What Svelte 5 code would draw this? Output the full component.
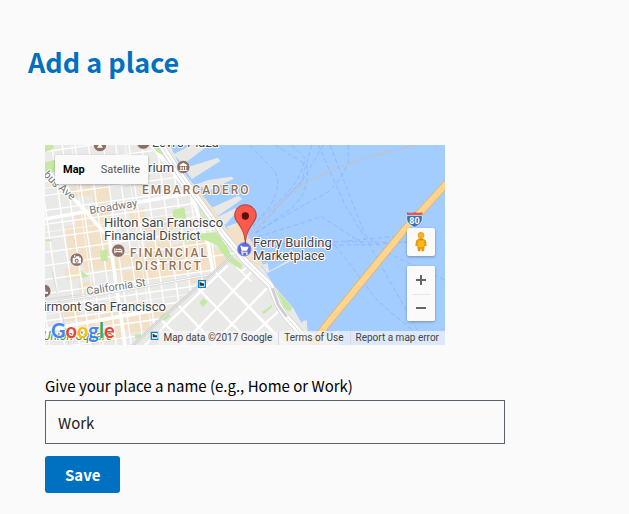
<script>
  let name = $state('Work');
  let view = $state('map');

  // Street grids, in map-drawing units (three per pixel)
  const avenues = [-60, -15, 30, 62, 100, 140, 185, 222, 262, 300, 345, 385, 425, 470, 510];
  const streets = [20, 62, 108, 152, 196, 238, 280, 322, 362, 404, 446, 486, 528, 570, 612, 654];
  const blocks = [
    [75, 128, 60, 32], [140, 130, 54, 50], [140, 185, 50, 50], [90, 205, 56, 44], [60, 245, 80, 40],
    [128, 240, 60, 80], [66, 285, 60, 70], [140, 320, 56, 56], [60, 370, 44, 36], [250, 195, 46, 40],
    [295, 225, 84, 40], [220, 325, 76, 40], [300, 295, 80, 76], [375, 300, 60, 72], [425, 290, 60, 90],
    [180, 345, 50, 40], [110, 320, 34, 60], [100, 415, 44, 30], [225, 380, 76, 34], [300, 375, 80, 34],
    [385, 360, 110, 30], [430, 396, 50, 20], [55, 490, 46, 40], [100, 520, 80, 44], [180, 505, 60, 60],
    [240, 475, 54, 28], [245, 515, 70, 50], [125, 560, 100, 40], [315, 495, 50, 26], [235, 55, 50, 30]
  ];
  const ferries = [
    'M615 0L690 80Q715 140 660 200L625 245', 'M690 0L785 60Q800 130 740 190L625 270',
    'M740 0L780 40Q770 110 690 180L625 240', 'M800 0L770 110L650 230', 'M835 0L770 110L640 250',
    'M910 0V50Q895 100 850 140L625 265', 'M820 0L900 180L985 320L1120 560',
    'M855 0L960 270L1040 330L1200 405', 'M640 290Q900 310 1090 290', 'M690 305Q950 285 1090 270',
    'M870 300L1000 470L1105 558', 'M640 275L830 215L960 300', 'M900 290L1090 292'
  ];
</script>

<main>
  <h1>Add a place</h1>

  <form onsubmit={(e) => e.preventDefault()}>
    <div class="map">
      <svg class="canvas" viewBox="0 0 400 200" preserveAspectRatio="xMinYMin slice" role="img" aria-label="Map of the San Francisco waterfront">
        <defs>
          <clipPath id="land"><path d="M0 0H375L410 75L455 130L500 185L545 250L590 290L625 335L655 372L690 425L745 490L770 535L790 560V600H0Z" /></clipPath>
          <clipPath id="north"><path d="M0 0H345L600 340L560 330L330 540L260 600H0Z" /></clipPath>
          <clipPath id="south"><path d="M562 338L600 365L680 440L720 520L770 570V600H270L340 532Z" /></clipPath>
        </defs>
        <g transform="scale(.33333)" fill="none">
          <path fill="#a3ccff" d="M0 0H1200V600H0Z" />
          <g fill="#e8e8e6">
            <path d="M385 28L440 0H492L415 58ZM418 70L518 38L526 48L440 103ZM455 118L490 105L560 95L566 101L490 138ZM500 188L580 152L592 162L520 212ZM520 215L570 190L578 198L540 240ZM545 245L580 232L586 240L560 262ZM650 360L665 385L745 345L740 341L672 378L668 355ZM770 530L785 525L788 560L850 575L880 555V600H770Z" />
          </g>
          <path fill="#f2e0c7" d="M545 255L588 232L612 275L655 360L640 372L590 320Z" />
          <g clip-path="url(#land)">
            <path fill="#e9e9e8" d="M0 0H800V600H0Z" />
            <g fill="#f2e0c7">
              {#each blocks as [x, y, w, h]}
                <path d="M{x} {y}l{w} {-w * 0.15}l{h * 0.14} {h}l{-w} {w * 0.15}Z" />
              {/each}
              <path d="M455 130L500 185L545 250L625 310L660 375L590 335L500 225L440 135ZM490 300L550 330L550 350L500 385Z" />
            </g>
            <g clip-path="url(#north)" stroke="#fff">
              <g stroke-width="4">
                {#each avenues as x}<path d="M{x - 10} 0L{x + 74} 600" />{/each}
                {#each streets as y}<path d="M0 {y}L600 {y - 84}" />{/each}
              </g>
              <path stroke-width="2" d="M80 0L165 600M240 0L325 600M0 130L500 60M0 262L450 199M0 508L450 445" />
              <path stroke-width="11" d="M185 225L240 600M0 222L430 145M0 555L360 490M0 70L105 180L180 265M320 0L440 150L490 300L505 390" />
              <path stroke="#d4d4d4" stroke-width="7" d="M0 472L130 455L500 388L530 365" />
              <path stroke-width="3" d="M0 472L130 455L500 388L530 365" />
              <path stroke="#c9c9ca" stroke-width="2" stroke-dasharray="12 2" d="M22 380L72 600M0 463L130 446" />
            </g>
            <g fill="#c5e8a3">
              <path d="M0 0H25V12L0 22ZM0 52L30 45V80L0 85ZM318 0L345 5L358 30L340 24ZM383 195L418 187L424 222L384 218ZM440 268L515 262L545 303L560 335L592 360L588 374L550 345L515 300L480 285L442 288ZM165 318L188 312V348H168ZM106 375L118 385L132 394L112 399ZM695 434L742 488L735 500L718 492ZM345 515L365 500L378 514L352 530ZM388 480L400 472L405 482L396 489ZM0 283H20V289H0ZM270 568H288V580H270ZM408 278L440 272V286L412 290Z" />
            </g>
            <path fill="#d9e7d0" d="M458 178L478 184L505 228L468 226Z" />
            <g clip-path="url(#south)" stroke="#fff" stroke-width="7">
              <path d="M450 420L660 640M505 375L730 610M385 465L540 630M340 515L430 610M620 380L410 600M548 362L300 600M665 430L500 600M705 495L590 600" />
              <path stroke-width="5" d="M575 365L620 410M590 380L610 362M585 455L700 575" />
            </g>
            <path fill="#c5e8a3" d="M463 472L476 460L488 471L474 486ZM652 500L681 479V487L656 508ZM520 310L545 322L592 360L586 372L552 350Z" />
            <path stroke="#c4c4c4" stroke-width="9" d="M562 333L340 530L260 604" />
            <path stroke="#ededed" stroke-width="6" d="M562 333L340 530L260 604" />
            <path stroke="#c0c0c0" stroke-width="2" d="M562 333L340 530L260 604" />
            <path stroke="#d0d0d0" stroke-width="21" d="M345 -5L410 95L475 185L535 268L598 345L675 420L700 480L725 518L790 590" />
            <path stroke="#fff" stroke-width="17" d="M345 -5L410 95L475 185L535 268L598 345L675 420L700 480L725 518L790 590" />
            <path stroke="#ccc" stroke-width="2" d="M345 -5L410 95L475 185L535 268L598 345L675 420L700 480L725 518L790 590" />
            <path stroke="#cfcfcf" stroke-width="9" d="M682 430L700 480L725 515" />
          </g>
          <g stroke="#86aefc" stroke-width="2" stroke-dasharray="14 8">
            {#each ferries as d}<path {d} />{/each}
          </g>
          <path stroke="#bfc3cb" stroke-width="4" stroke-dasharray="78 12" d="M610 280L665 215L760 125L850 80L950 42L1110 0" />
          <path stroke="#e5b567" stroke-width="23" d="M805 600L840 545L1075 258L1210 110" />
          <path stroke="#ffd48f" stroke-width="18" d="M805 600L840 545L1075 258L1210 110" />
        </g>

        <g class="labels">
          <text class="road" transform="translate(-2 30) rotate(48)">bus</text>
          <text class="road" transform="translate(13 44) rotate(40)">Ave</text>
          <text class="road" transform="translate(45 69) rotate(-9)">Broadway</text>
          <text class="road" transform="translate(42 150) rotate(-9)">California St</text>
          <text class="poi" x="107" y="2">Levi's Plaza</text>
          <text class="poi" x="103" y="27">rium</text>
          <text class="area" x="97" y="49">EMBARCADERO</text>
          <text class="poi" x="59" y="82">Hilton San Francisco</text>
          <text class="poi" x="59" y="95">Financial District</text>
          <text class="area" x="85" y="112">FINANCIAL</text>
          <text class="area" x="90" y="125">DISTRICT</text>
          <text class="poi" x="208" y="102">Ferry Building</text>
          <text class="poi" x="208" y="115">Marketplace</text>
          <text class="poi" x="121" y="166" text-anchor="end">Fairmont San Francisco</text>
          <text class="park" x="-2" y="195">Union Square</text>
        </g>

        <g transform="scale(.33333)">
          <g fill="#8d6e63" stroke="#fff" stroke-width="2">
            <circle cx="165" cy="0" r="20" /><circle cx="295" cy="-7" r="20" />
            <circle cx="415" cy="66" r="20" /><circle cx="220" cy="317" r="20" />
            <circle cx="95" cy="344" r="20" /><circle cx="-2" cy="438" r="20" />
          </g>
          <path fill="#fff" d="M404 60L415 53L426 60V63H404ZM406 65H410V74H406ZM413 65H417V74H413ZM420 65H424V74H420ZM403 75H427V78H403ZM156 8L161 0H169L174 8ZM208 310H211V318H229V311L232 314V325H229V322H211V325H208ZM213 311H218V316H213ZM220 311H228V316H220ZM-2 431H1V440H9V446H-2Z" />
          <path fill="#fff" fill-rule="evenodd" d="M83 338H91L94 334H103V338H108V355H83ZM95 341A6 6 0 1 0 95.100 341ZM87 331H91V335H87Z" />
          <circle cx="95" cy="347" r="3" fill="#fff" />
          <circle cx="598" cy="313" r="20" fill="#5c6be0" stroke="#7986f0" stroke-width="3" />
          <path fill="#fff" d="M586 302H591L593 305H611L606 317H593L592 320H608V323H588L590 317ZM590 325H595V329H590ZM603 325H608V329H603Z" />
          <g fill="#fff" stroke="#0288d1" stroke-width="4">
            <path d="M461 407H481V427H461ZM319 562H340V583H319Z" />
          </g>
          <path fill="#333" d="M464 412H468L471 415H477V422H464ZM323 567H326L330 571H336V577H323Z" />
          <path fill="#c93b31" stroke="#9d2d24" stroke-width="2" d="M601 296C599 270 594 258 583 241C575 229 569 222 569 211C569 193 583 179 601 179C619 179 634 193 634 211C634 222 628 229 620 241C609 258 603 270 601 296Z" />
          <path fill="#fb5a4d" d="M601 286C598 266 594 255 585 240C577 228 571 222 571 211C571 194 584 181 601 181C618 181 632 194 632 211C632 222 626 228 618 240C608 256 604 266 601 286Z" />
          <circle cx="601" cy="213" r="11" fill="#5b100c" />
          <path fill="#3573c4" stroke="#fff" stroke-width="2" d="M1086 211H1131C1136 231 1124 240 1109 247C1093 240 1081 231 1086 211Z" />
          <path fill="#dc5a56" d="M1086 201Q1098 206 1109 201Q1120 206 1132 201V210H1086Z" />
        </g>
        <text class="shield" x="369.500" y="79" text-anchor="middle">80</text>
        <text class="google" x="6" y="193"><tspan fill="#4285f4">G</tspan><tspan fill="#ea4335">o</tspan><tspan fill="#fbbc05">o</tspan><tspan fill="#4285f4">g</tspan><tspan fill="#34a853">l</tspan><tspan fill="#ea4335">e</tspan></text>
      </svg>

      <div class="types">
        <button type="button" class:on={view === 'map'} onclick={() => (view = 'map')}>Map</button>
        <button type="button" class:on={view === 'satellite'} onclick={() => (view = 'satellite')}>Satellite</button>
      </div>

      <div class="controls">
        <button type="button" class="pegman" aria-label="Street View">
          <svg width="12" height="20" viewBox="0 0 36 60">
            <path fill="#e59b0b" d="M9 21Q18 16 27 21L33 26L35 42H29L27 58H20L18 48L16 58H9L7 42H1L3 26Z" />
            <path fill="#fbb71b" d="M11 22H25L28 38L24 45H12L8 38Z" />
            <path fill="#d98208" d="M10 20L18 27L26 20Z" />
            <circle cx="18" cy="10" r="9" fill="#f9b31a" stroke="#e09509" stroke-width="2" />
          </svg>
        </button>
        <div class="zoom">
          <button type="button" aria-label="Zoom in"><svg width="12" height="12" viewBox="0 0 12 12"><path d="M1 6H11M6 1V11" /></svg></button>
          <button type="button" aria-label="Zoom out"><svg width="12" height="12" viewBox="0 0 12 12"><path d="M1 6H11" /></svg></button>
        </div>
      </div>

      <div class="credits">
        <span>Map data ©2017 Google</span>
        <a href="#terms">Terms of Use</a>
        <a href="#report">Report a map error</a>
      </div>
    </div>

    <label for="place">Give your place a name (e.g., Home or Work)</label>
    <input id="place" type="text" bind:value={name} />
    <button class="save" type="submit">Save</button>
  </form>
</main>

<style>
  :global(body) {
    background: #fafafa;
  }
  main {
    padding: 40px 28px 20px;
    font-family: 'Noto Sans CJK JP', 'Noto Sans CJK SC', sans-serif;
    color: #000;
  }
  h1 {
    margin: 0;
    font-size: 27px;
    line-height: 44px;
    font-weight: 700;
    color: #0070c0;
  }
  form {
    display: flex;
    flex-direction: column;
    align-items: flex-start;
    max-width: 460px;
    margin: 61px 17px 0;
  }
  .map {
    position: relative;
    width: 100%;
    max-width: 400px;
    margin-bottom: 29px;
    overflow: hidden;
    font-family: Roboto, sans-serif;
  }
  .canvas {
    display: block;
    width: 100%;
    height: 200px;
  }
  .labels text {
    paint-order: stroke;
    stroke: #fff;
    stroke-width: 2px;
    stroke-linejoin: round;
  }
  .labels .poi {
    font-size: 13px;
    fill: #444;
  }
  .labels .road {
    font-size: 11px;
    fill: #737373;
  }
  .labels .area {
    font-size: 12px;
    font-weight: 500;
    letter-spacing: 2px;
    fill: #957253;
  }
  .labels .park {
    font-size: 12px;
    font-style: italic;
    fill: #558b2f;
  }
  .shield {
    font-size: 9px;
    font-weight: 700;
    fill: #fff;
  }
  .google {
    font-family: Lato, sans-serif;
    font-size: 20px;
    font-weight: 700;
    paint-order: stroke;
    stroke: #fff;
    stroke-width: 1px;
  }
  button {
    padding: 0;
    border: 0;
    font: inherit;
    cursor: pointer;
  }
  .types {
    position: absolute;
    top: 10px;
    left: 10px;
    display: flex;
    border-radius: 2px;
    overflow: hidden;
    box-shadow: 0 1px 3px rgba(0, 0, 0, 0.3);
  }
  .types button {
    padding: 0 8px;
    background: #fafafa;
    font-size: 11px;
    line-height: 29px;
    color: #565656;
  }
  .types .on {
    font-weight: 700;
    color: #000;
  }
  .controls {
    position: absolute;
    top: 83px;
    right: 10px;
    display: flex;
    flex-direction: column;
    gap: 10px;
  }
  .controls button {
    display: flex;
    align-items: center;
    justify-content: center;
    width: 28px;
    height: 28px;
    background: #fafafa;
  }
  .controls .pegman,
  .zoom {
    border-radius: 2px;
    box-shadow: 0 1px 3px rgba(0, 0, 0, 0.3);
  }
  .zoom {
    overflow: hidden;
    background: #fafafa;
  }
  .zoom button + button {
    height: 27px;
    background: linear-gradient(#e6e6e6, #e6e6e6) center top / 19px 1px no-repeat #fafafa;
  }
  .zoom path {
    stroke: #666;
    stroke-width: 2;
  }
  .credits {
    position: absolute;
    right: 0;
    bottom: 0;
    display: flex;
    background: rgba(245, 245, 245, 0.7);
    font-size: 10px;
    line-height: 14px;
    color: #444;
  }
  .credits > * {
    padding: 0 6px 0 5px;
    color: #444;
    text-decoration: none;
    white-space: nowrap;
  }
  .credits a {
    border-left: 1px solid #d5dbe3;
  }
  label {
    font-size: 15px;
    line-height: 24px;
  }
  input {
    box-sizing: border-box;
    width: 100%;
    height: 44px;
    margin: 2px 0 12px;
    padding: 0 12px;
    border: 1px solid #5b616b;
    border-radius: 0;
    background: transparent;
    font: inherit;
    font-size: 15px;
    color: #212121;
  }
  .save {
    padding: 0 20px;
    border-radius: 3px;
    background: #0070c0;
    font-size: 15px;
    line-height: 37px;
    font-weight: 700;
    color: #fff;
  }
</style>
